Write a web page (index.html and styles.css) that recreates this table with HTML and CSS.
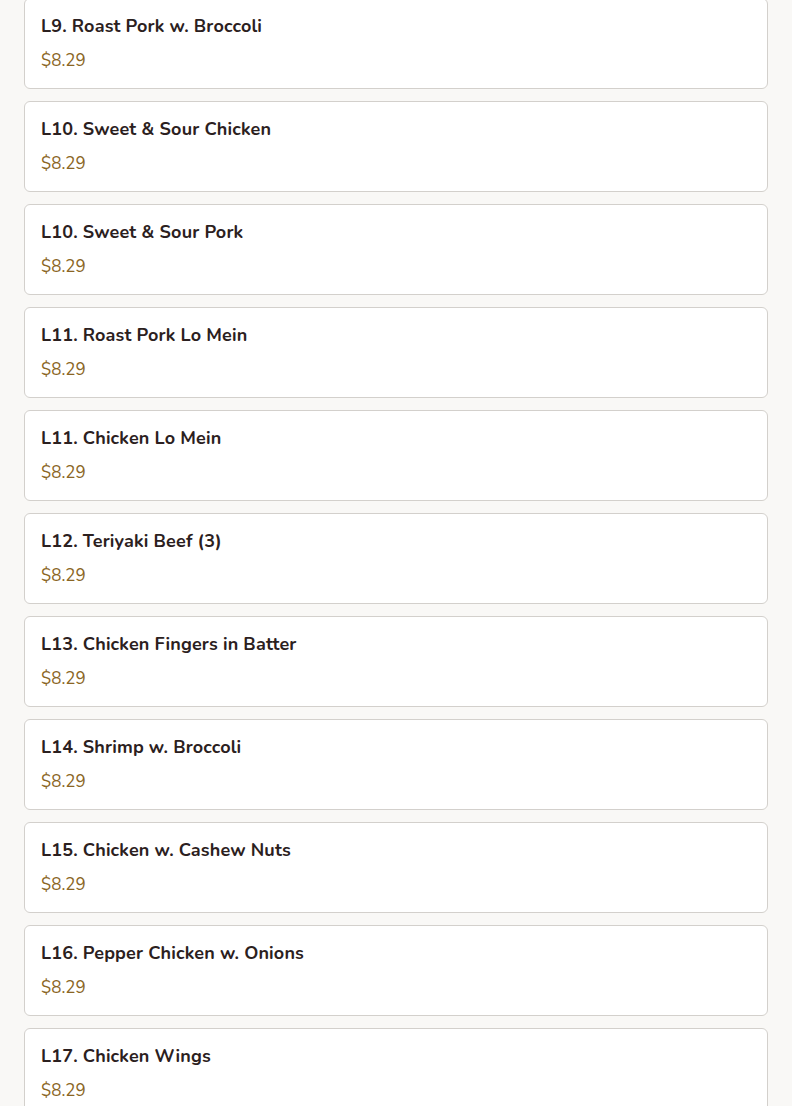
FILE: index.html
```html
<!DOCTYPE html>
<html lang="en">
<head>
<meta charset="utf-8">
<title>Menu</title>
<link rel="stylesheet" href="styles.css">
</head>
<body>
<div class="list">
  <div class="card"><div class="name">L9. Roast Pork w. Broccoli</div><div class="price">$8.29</div></div>
  <div class="card"><div class="name">L10. Sweet &amp; Sour Chicken</div><div class="price">$8.29</div></div>
  <div class="card"><div class="name">L10. Sweet &amp; Sour Pork</div><div class="price">$8.29</div></div>
  <div class="card"><div class="name">L11. Roast Pork Lo Mein</div><div class="price">$8.29</div></div>
  <div class="card"><div class="name">L11. Chicken Lo Mein</div><div class="price">$8.29</div></div>
  <div class="card"><div class="name">L12. Teriyaki Beef (3)</div><div class="price">$8.29</div></div>
  <div class="card"><div class="name">L13. Chicken Fingers in Batter</div><div class="price">$8.29</div></div>
  <div class="card"><div class="name">L14. Shrimp w. Broccoli</div><div class="price">$8.29</div></div>
  <div class="card"><div class="name">L15. Chicken w. Cashew Nuts</div><div class="price">$8.29</div></div>
  <div class="card"><div class="name">L16. Pepper Chicken w. Onions</div><div class="price">$8.29</div></div>
  <div class="card"><div class="name">L17. Chicken Wings</div><div class="price">$8.29</div></div>
</div>
</body>
</html>
```
FILE: styles.css
```css
html, body {
  margin: 0;
  padding: 0;
  background: #f9f8f6;
}
body {
  font-family: "Nunito", "Lato", "Open Sans", sans-serif;
  overflow: hidden;
  height: 1106px;
}
.list {
  display: flex;
  flex-direction: column;
  gap: 12px;
  padding: 0 24px;
  margin-top: -2px;
}
.card {
  background: #ffffff;
  border: 1px solid #d3d0cc;
  border-radius: 6px;
  padding: 16px 16px 15px;
}
.name {
  font-size: 18px;
  line-height: 22px;
  font-weight: 700;
  letter-spacing: 0.15px;
  color: #2b2020;
  margin-bottom: 12px;
}
.price {
  font-size: 17px;
  line-height: 24px;
  color: #8a6524;
}
```
